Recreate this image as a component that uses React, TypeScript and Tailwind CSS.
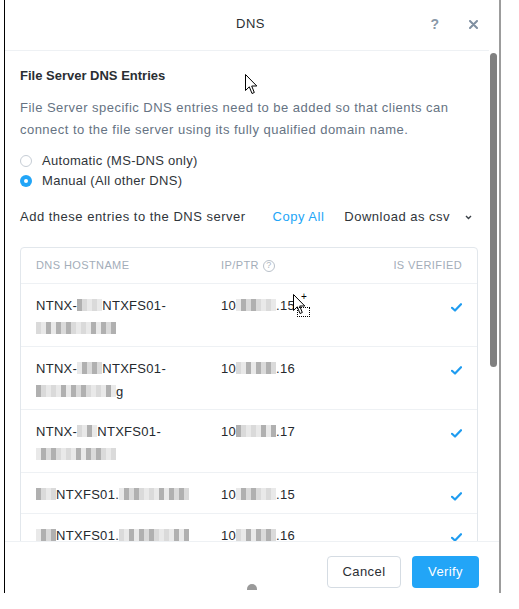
import React from 'react'

const SHADES = [
  'bg-[#dadada]',
  'bg-[#c4c4c4]',
  'bg-[#e6e6e6]',
  'bg-[#b0b0b0]',
  'bg-[#dfdfdf]',
  'bg-[#d0d0d0]',
  'bg-[#e9e9e9]',
  'bg-[#bababa]',
  'bg-[#e2e2e2]',
]

// pixelated block standing in for masked text
function Masked({ blocks, seed = 0 }: { blocks: number; seed?: number }) {
  return (
    <span className="inline-flex align-middle h-[12px] -mt-[3px]">
      {Array.from({ length: blocks }).map((_, i) => (
        <span key={i} className={`w-[5px] h-full ${SHADES[(i * 5 + seed * 3 + (i % 3)) % SHADES.length]}`} />
      ))}
    </span>
  )
}

function Check() {
  return (
    <svg width="11" height="9" viewBox="0 0 11 9" className="mt-[8px]">
      <path d="M1 4.8 L4 7.5 L10 1.2" fill="none" stroke="#1f9cf0" strokeWidth="2.2" strokeLinecap="round" strokeLinejoin="round" />
    </svg>
  )
}

function Arrow({ className }: { className: string }) {
  return (
    <svg width="13" height="21" viewBox="0 0 13 21" className={`absolute ${className}`}>
      <path d="M0.5 0.5 L0.5 16.5 L4.3 12.8 L7 19.5 L9.3 18.5 L6.7 12 L11.8 12 Z" fill="#fff" stroke="#000" strokeWidth="1" />
    </svg>
  )
}

const ROWS = [
  { host: 'NTNX-', hostEnd: 'NTXFS01-', long: true, ip: '.15', seed: 1, pre: 5 },
  { host: 'NTNX-', hostEnd: 'NTXFS01-', long: true, ip: '.16', seed: 2, pre: 5, tail: 'g' },
  { host: 'NTNX-', hostEnd: 'NTXFS01-', long: true, ip: '.17', seed: 3, pre: 4 },
  { host: '', hostEnd: 'NTXFS01.', long: false, ip: '.15', seed: 4, pre: 4 },
  { host: '', hostEnd: 'NTXFS01.', long: false, ip: '.16', seed: 5, pre: 4 },
]

export default function App() {
  return (
    <div className="relative w-[519px] h-[609px] bg-white overflow-hidden text-[13px] text-[#2f3338]" style={{ fontFamily: '"Liberation Sans", Arial, sans-serif' }}>
      <div className="ml-[4px] w-[497px] h-[593px] flex flex-col border-l border-l-black border-r-2 border-r-[#9c9c9c]">
        {/* Header */}
        <div className="h-[51px] shrink-0 flex items-center border-b border-[#eef1f4] mr-[10px] pb-[2px]">
          <div className="flex-1" />
          <div className="text-[13px] text-[#2b2f33] tracking-[0.5px] pl-[18px]">DNS</div>
          <div className="flex-1 flex justify-end items-center gap-[30px] pr-[11px]">
            <span className="text-[14px] font-bold text-[#8a98a8]">?</span>
            <svg width="9" height="9" viewBox="0 0 9 9">
              <path d="M1 1 L8 8 M8 1 L1 8" stroke="#7f8fa1" strokeWidth="2" strokeLinecap="round" />
            </svg>
          </div>
        </div>

        {/* Body */}
        <div className="relative flex-1 overflow-hidden pl-[15px] pr-[21px]">
          <div className="absolute right-[2px] top-[2px] w-[7px] h-[314px] rounded-full bg-[#808080]" />

          <div className="pt-[16px] leading-[18px] font-bold text-[#2a2e33] text-[13px]">File Server DNS Entries</div>
          <p className="mt-[12px] leading-[22px] text-[#667383] tracking-[0.47px]">
            File Server specific DNS entries need to be added so that clients can
            <br />
            connect to the file server using its fully qualified domain name.
          </p>

          <div className="mt-[10px] flex flex-col tracking-[0.3px]">
            <label className="flex items-center h-[20px] gap-[10px]">
              <span className="w-[12px] h-[12px] rounded-full border border-[#c6cdd5] bg-white" />
              <span className="text-[#30353a]">Automatic (MS-DNS only)</span>
            </label>
            <label className="flex items-center h-[20px] gap-[10px]">
              <span className="w-[12px] h-[12px] rounded-full bg-[#22a5f7] flex items-center justify-center">
                <span className="w-[4px] h-[4px] rounded-full bg-white" />
              </span>
              <span className="text-[#30353a]">Manual (All other DNS)</span>
            </label>
          </div>

          <div className="mt-[16px] h-[20px] flex items-center tracking-[0.5px]">
            <span className="text-[#30353a]">Add these entries to the DNS server</span>
            <span className="ml-[27px] text-[#22a5f7]">Copy All</span>
            <span className="ml-[20px] text-[#30353a]">Download as csv</span>
            <svg width="7" height="5" viewBox="0 0 7 5" className="ml-[15px] mt-[1px]">
              <path d="M1 1 L3.5 3.5 L6 1" fill="none" stroke="#3a4047" strokeWidth="1.4" />
            </svg>
          </div>

          {/* Table */}
          <div className="mt-[20px] border border-[#e2e7ec] rounded-[4px]">
            <div className="h-[36px] grid grid-cols-[185px_1fr_auto] items-center px-[15px] border-b border-[#eef1f4] text-[11px] text-[#a3adb9] tracking-[0.4px]">
              <span>DNS HOSTNAME</span>
              <span className="flex items-center gap-[4px]">
                IP/PTR
                <span className="w-[12px] h-[12px] rounded-full border border-[#b9c1ca] text-[9px] leading-none flex items-center justify-center text-[#b0b8c1] tracking-normal">?</span>
              </span>
              <span>IS VERIFIED</span>
            </div>
            {ROWS.map((r, i) => (
              <div key={i} className="grid grid-cols-[185px_1fr_auto] px-[15px] pt-[11px] pb-[6px] border-b border-[#eef1f4] leading-[22.5px] text-[#25292e] tracking-[0.3px]">
                <div>
                  {r.long ? (
                    <>
                      <div>
                        {r.host}
                        <Masked blocks={r.pre} seed={r.seed} />
                        {r.hostEnd}
                      </div>
                      <div>
                        <Masked blocks={16} seed={r.seed + 2} />
                        {r.tail}
                      </div>
                    </>
                  ) : (
                    <div>
                      <Masked blocks={r.pre} seed={r.seed} />
                      {r.hostEnd}
                      <Masked blocks={14} seed={r.seed + 1} />
                    </div>
                  )}
                </div>
                <div>
                  10
                  <Masked blocks={8} seed={r.seed + 4} />
                  {r.ip}
                </div>
                <div>
                  <Check />
                </div>
              </div>
            ))}
          </div>
        </div>

        {/* Footer */}
        <div className="h-[52px] shrink-0 border-t border-[#eef1f4] flex justify-end items-start gap-[11px] pt-[14px] pr-[20px]">
          <button className="w-[74px] h-[32px] rounded-[4px] border border-[#d5dce3] bg-white text-[#2b2f33] text-[13px] tracking-[0.4px]">Cancel</button>
          <button className="w-[67px] h-[32px] rounded-[4px] bg-[#22a5f7] text-white text-[13px] tracking-[0.4px]">Verify</button>
        </div>
      </div>

      {/* cursors and background bits */}
      <Arrow className="left-[245px] top-[74px]" />
      <Arrow className="left-[293px] top-[294px]" />
      <span className="absolute left-[301px] top-[292px] text-[10px] leading-none text-black">+</span>
      <span className="absolute left-[297px] top-[307px] w-[13px] h-[10px] border border-dotted border-black" />
      <span className="absolute left-[247px] top-[584px] w-[10px] h-[6px] rounded-t-full bg-[#9a9a9a]" />
    </div>
  )
}
